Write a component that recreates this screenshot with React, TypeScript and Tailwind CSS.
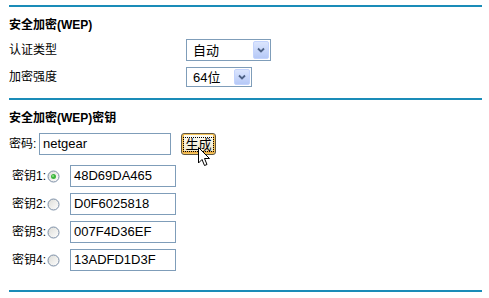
import React from 'react';

const font = "font-['Liberation_Sans','Noto_Sans_CJK_SC',sans-serif]";

const Select = ({ value, width }: { value: string; width: string }) => (
  <div className={`flex items-stretch border border-[#7f9db9] bg-white ${width} h-full`}>
    <span className="flex-1 flex items-center pl-[6px] text-[13px] leading-none">{value}</span>
    <span className="m-[1px] w-[16px] flex items-center justify-center rounded-[2px] border border-[#c3d3fd] bg-gradient-to-b from-[#dbe5fd] to-[#b6c9f7]">
      <svg width="8" height="6" viewBox="0 0 8 6">
        <path d="M1 1.5 L4 4.5 L7 1.5" fill="none" stroke="#4d6185" strokeWidth="1.8" />
      </svg>
    </span>
  </div>
);

const Radio = ({ checked }: { checked?: boolean }) => (
  <svg width="13" height="13" viewBox="0 0 13 13">
    <defs>
      <linearGradient id="rg" x1="0" y1="0" x2="1" y2="1">
        <stop offset="0" stopColor="#dcdcd7" />
        <stop offset="1" stopColor="#ffffff" />
      </linearGradient>
    </defs>
    <circle cx="6.5" cy="6.5" r="5.5" fill="url(#rg)" stroke="#7b8ea6" strokeWidth="1" />
    {checked && <circle cx="6.5" cy="6.5" r="2.5" fill="#3cb53c" />}
    {checked && <circle cx="6" cy="6" r="1" fill="#8be08b" />}
  </svg>
);

const Line = () => <div className="h-[2px] bg-[#1a8cb8]" />;

const keys = ['48D69DA465', 'D0F6025818', '007F4D36EF', '13ADFD1D3F'];

export default function App() {
  return (
    <div className={`${font} text-[12px] text-black bg-white w-[489px] h-[298px] pl-[9px] pr-[7px] pt-[5px]`}>
      {/* 安全加密 */}
      <Line />
      <div className="mt-[8px] h-[20px] flex items-center font-bold">安全加密(WEP)</div>
      <div className="mt-[4px] h-[22px] flex items-center">
        <span className="w-[177px]">认证类型</span>
        <Select value="自动" width="w-[85px]" />
      </div>
      <div className="mt-[6px] h-[20px] flex items-center">
        <span className="w-[177px]">加密强度</span>
        <Select value="64位" width="w-[66px]" />
      </div>

      <div className="mt-[11px]">
        <Line />
      </div>
      <div className="mt-[8px] h-[20px] flex items-center font-bold">安全加密(WEP)密钥</div>

      {/* 密码 */}
      <div className="mt-[5px] h-[22px] flex items-center">
        <span className="w-[30px]">密码:</span>
        <div className="w-[132px] h-full border border-[#7f9db9] flex items-center pl-[3px] text-[13px]">netgear</div>
        <div className="relative ml-[10px] h-full">
          <button className="h-full w-[35px] rounded-[3px] border border-[#5d5440] bg-gradient-to-b from-[#fdfcf5] to-[#ece6c9] shadow-[inset_0_0_0_1px_#f7c659,inset_0_-1px_0_2px_#eeb04a] flex items-center justify-center">
            <span className="border border-dotted border-black px-[1px] leading-[13px] text-[13px]">生成</span>
          </button>
          <svg className="absolute left-[17px] top-[14px]" width="13" height="20" viewBox="0 0 13 20">
            <path d="M0.5 0.5 L0.5 16 L4 12.5 L6.5 18.5 L9 17.5 L6.5 11.5 L11.5 11.5 Z" fill="#fff" stroke="#000" strokeWidth="1" strokeLinejoin="miter" />
          </svg>
        </div>
      </div>

      {/* 密钥 */}
      <div className="mt-[10px] flex flex-col gap-[6px]">
        {keys.map((k, i) => (
          <div key={k} className="h-[22px] flex items-center pl-[3px]">
            <span className="w-[35px]">密钥{i + 1}:</span>
            <Radio checked={i === 0} />
            <div className="ml-[10px] w-[106px] h-full border border-[#7f9db9] flex items-center pl-[3px] text-[13px]">{k}</div>
          </div>
        ))}
      </div>

      <div className="mt-[19px]">
        <Line />
      </div>
    </div>
  );
}
